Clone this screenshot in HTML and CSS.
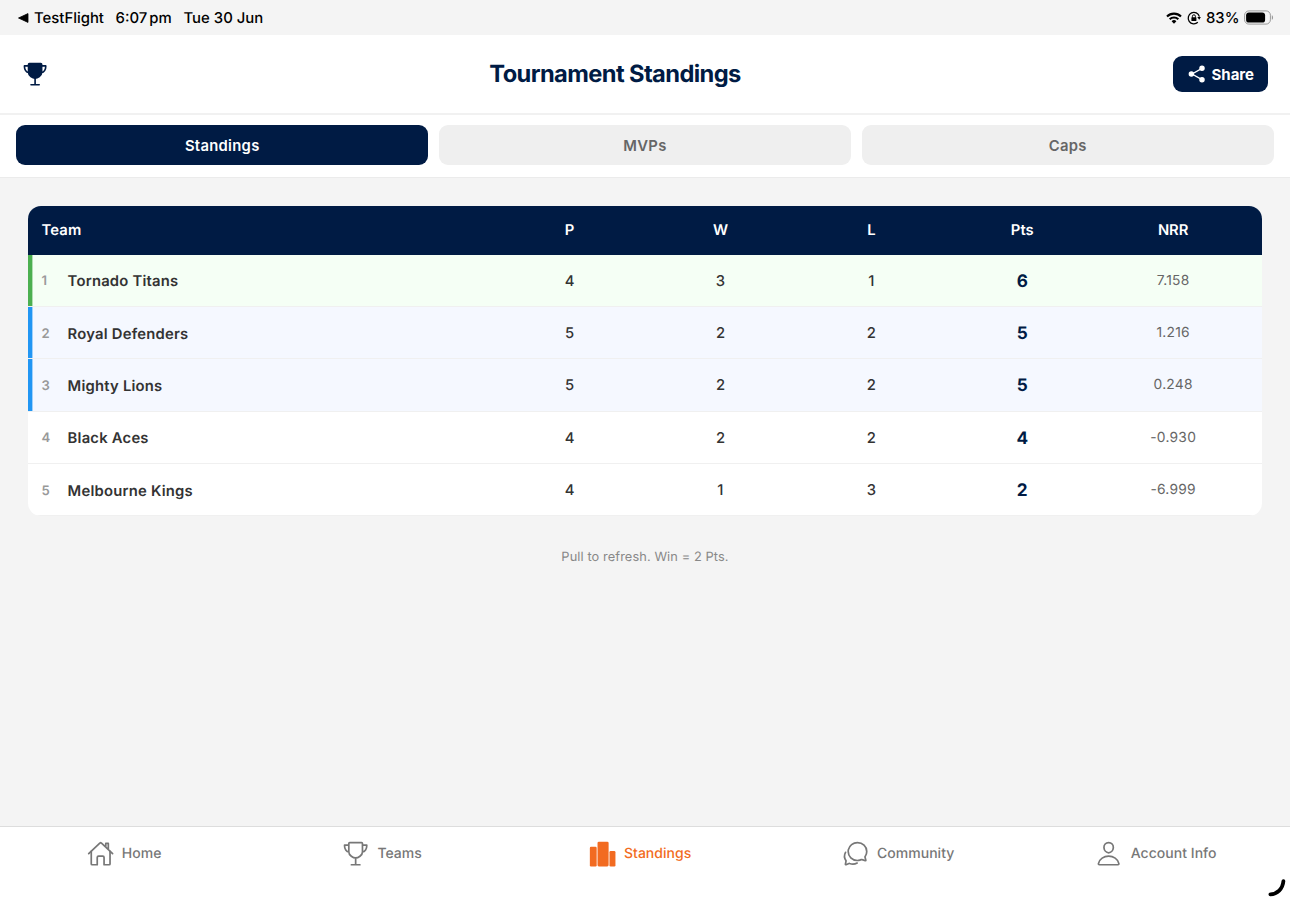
FILE: index.html
```html
<!DOCTYPE html>
<html lang="en">
<head>
<meta charset="utf-8">
<title>Tournament Standings</title>
<link rel="stylesheet" href="styles.css">
</head>
<body>
<div class="app">
  <div class="status">
    <div class="status-left">
      <svg class="back" viewBox="0 0 11 10"><path d="M.5 5 10 .6V9.4Z" fill="#000" stroke="#000" stroke-width=".8" stroke-linejoin="round"/></svg>
      <span class="st-app">TestFlight</span><span class="st-time">6:07<i></i>pm</span><span class="st-date">Tue 30 Jun</span>
    </div>
    <div class="status-right">
      <svg class="wifi" viewBox="0 0 16 12" fill="none" stroke="#000" stroke-width="2.1"><path d="M1 4.5a10 10 0 0 1 14 0M3.7 7.2a6.1 6.1 0 0 1 8.6 0"/><path d="M8 11.7 5.6 9.2a3.4 3.4 0 0 1 4.8 0Z" fill="#000" stroke="none"/></svg>
      <svg class="lock" viewBox="0 0 14 14" fill="none" stroke="#000" stroke-width="1.3"><path d="M10.8 11.3A5.7 5.7 0 1 1 12.4 5.6"/><path d="M10.3 6h3.6l-1.7 2.7Z" fill="#000" stroke="none"/><path d="M5.4 6.7V5.3a1.5 1.5 0 0 1 3 0v1.4" stroke-width="1"/><rect x="4.4" y="6.2" width="5" height="3.8" rx=".6" fill="#000" stroke="none"/></svg>
      <span class="st-pct">83%</span>
      <svg class="battery" viewBox="0 0 30 15"><rect x=".6" y=".9" width="25.8" height="13.2" rx="4.3" fill="none" stroke="#999"/><rect x="2.1" y="2.4" width="19" height="10.2" rx="2.9"/><path d="M27.8 5.2c1.7.6 1.7 4 0 4.6Z" fill="#999"/></svg>
    </div>
  </div>
  <header class="header">
    <svg class="cup" viewBox="0 0 512 512" fill="none" stroke="currentColor" stroke-width="32" stroke-linecap="round" stroke-linejoin="round"><path d="M176 464H336M256 464V336M128 96H48v16c0 55.22 33.55 112 80 112M384 96h80v16c0 55.22-33.55 112-80 112"/><path fill="currentColor" d="M384 224c0-50.64-.08-134.63-.12-160a16 16 0 0 0-16-16l-223.79.26a16 16 0 0 0-16 15.95c0 30.58-.13 129.17-.13 159.79 0 64.28 83 112 128 112S384 288.28 384 224Z"/></svg>
    <h1>Tournament Standings</h1>
    <button class="share"><svg viewBox="0 0 512 512" fill="#fff" stroke="#fff" stroke-width="36"><path d="m128 256 256-144M128 256l256 144"/><circle cx="112" cy="256" r="52"/><circle cx="384" cy="108" r="52"/><circle cx="384" cy="404" r="52"/></svg><span>Share</span></button>
  </header>
  <nav class="segments">
    <button class="segment active">Standings</button>
    <button class="segment">MVPs</button>
    <button class="segment">Caps</button>
  </nav>
  <main class="content">
    <section class="table">
      <div class="row head"><div class="team">Team</div><div>P</div><div>W</div><div>L</div><div>Pts</div><div>NRR</div></div>
      <div class="row first"><div class="team"><span class="rank">1</span>Tornado Titans</div><div>4</div><div>3</div><div>1</div><div class="pts">6</div><div class="nrr">7.158</div></div>
      <div class="row playoff"><div class="team"><span class="rank">2</span>Royal Defenders</div><div>5</div><div>2</div><div>2</div><div class="pts">5</div><div class="nrr">1.216</div></div>
      <div class="row playoff"><div class="team"><span class="rank">3</span>Mighty Lions</div><div>5</div><div>2</div><div>2</div><div class="pts">5</div><div class="nrr">0.248</div></div>
      <div class="row"><div class="team"><span class="rank">4</span>Black Aces</div><div>4</div><div>2</div><div>2</div><div class="pts">4</div><div class="nrr">-0.930</div></div>
      <div class="row"><div class="team"><span class="rank">5</span>Melbourne Kings</div><div>4</div><div>1</div><div>3</div><div class="pts">2</div><div class="nrr">-6.999</div></div>
    </section>
    <p class="hint">Pull to refresh. Win = 2 Pts.</p>
  </main>
  <nav class="tabbar">
    <a class="tab"><svg viewBox="0 0 512 512"><path d="M80 212V448a16 16 0 0 0 16 16h96V328a24 24 0 0 1 24-24h80a24 24 0 0 1 24 24V464h96a16 16 0 0 0 16-16V212"/><path d="M480 256 266.89 52c-5-5.28-16.69-5.34-21.78 0L32 256M400 179V64H352v69"/></svg><span>Home</span></a>
    <a class="tab"><svg viewBox="0 0 512 512"><path d="M176 464H336M256 464V336M384 224c0-50.64-.08-134.63-.12-160a16 16 0 0 0-16-16l-223.79.26a16 16 0 0 0-16 15.95c0 30.58-.13 129.17-.13 159.79 0 64.28 83 112 128 112S384 288.28 384 224ZM128 96H48v16c0 55.22 33.55 112 80 112M384 96h80v16c0 55.22-33.55 112-80 112"/></svg><span>Teams</span></a>
    <a class="tab current"><svg viewBox="0 0 512 512"><g fill="currentColor" stroke="none"><rect x="16" y="128" width="128" height="368" rx="22"/><rect x="160" y="32" width="208" height="464" rx="26"/><rect x="384" y="208" width="112" height="288" rx="22"/></g></svg><span>Standings</span></a>
    <a class="tab"><svg viewBox="0 0 512 512"><path d="M431 320.6c-1-3.6 1.2-8.6 3.3-12.2a33.68 33.68 0 0 1 2.1-3.1A162 162 0 0 0 464 215c.3-92.2-77.5-167-173.7-167C206.4 48 136.4 105.1 120 180.9a160.7 160.7 0 0 0-3.7 34.2c0 92.3 74.8 169.1 171 169.1 15.3 0 35.9-4.6 47.2-7.7s22.5-7.2 25.4-8.3a26.44 26.44 0 0 1 9.3-1.7 26 26 0 0 1 10.1 2L436 388.6a13.52 13.52 0 0 0 3.9 1 8 8 0 0 0 8-8 12.85 12.85 0 0 0-.5-2.7Z"/><path d="M66.46 232a146.23 146.23 0 0 0 6.39 152.67c2.31 3.49 3.61 6.19 3.21 8s-11.93 61.87-11.93 61.87a8 8 0 0 0 2.71 7.68A8.17 8.17 0 0 0 72 464a7.26 7.26 0 0 0 2.91-.6l56.21-22a15.7 15.7 0 0 1 12 .2c18.94 7.38 39.88 12 60.83 12A159.21 159.21 0 0 0 284 432.11"/></svg><span>Community</span></a>
    <a class="tab"><svg viewBox="0 0 512 512"><path d="M344 144c-3.92 52.87-44 96-88 96s-84.15-43.12-88-96c-4-55 35-96 88-96S348 90 344 144Z"/><path d="M256 304c-87 0-175.3 48-191.64 138.6C62.39 453.52 68.57 464 80 464H432c11.44 0 17.62-10.48 15.65-21.4C431.3 352 343 304 256 304Z"/></svg><span>Account Info</span></a>
  </nav>
  <svg class="corner" viewBox="0 0 22 22"><path d="M2.4 15.4C9.2 15 14.7 10.2 15.4 2.2" fill="none" stroke="#000" stroke-width="3.8" stroke-linecap="round"/></svg>
</div>
</body>
</html>
```
FILE: styles.css
```css
* { box-sizing: border-box; }
body { margin: 0; font-family: Inter, "Liberation Sans", sans-serif; background: #f4f4f4; color: #333; text-rendering: geometricPrecision; }
button { border: 0; font: inherit; padding: 0; }
.app { position: relative; width: 1290px; height: 901px; display: flex; flex-direction: column; overflow: hidden; }
.status { height: 35px; flex: none; display: flex; justify-content: space-between; align-items: center; padding: 0 16px 0 18px; font-size: 14.9px; font-weight: 500; color: #000; }
.status-left, .status-right { display: flex; align-items: center; white-space: nowrap; }
.back { width: 11px; height: 10px; margin-right: 5px; }
.st-app { width: 81.5px; }
.st-time { width: 68px; }
.st-time i { display: inline-block; width: 2px; }
.wifi { width: 16px; height: 12px; margin-right: 5px; }
.lock { width: 14px; height: 14px; margin-right: 5px; }
.st-pct { width: 38px; }
.battery { width: 30px; height: 15px; }
.header { height: 80px; flex: none; display: grid; grid-template-columns: 26px 1fr 96px; align-items: center; padding: 0 22px; background: #fff; border-bottom: 2px solid #f1f1f1; color: #001b44; }
.cup { width: 26.2px; height: 26.2px; }
h1 { margin: 0 0 0 10px; text-align: center; font-size: 23.7px; line-height: 30px; font-weight: 700; letter-spacing: -.6px; }
.share { justify-self: end; width: 95.5px; height: 36px; border-radius: 9px; background: #001b44; color: #fff; display: flex; align-items: center; padding-left: 14px; gap: 5px; font-size: 15px; font-weight: 700; }
.share svg { width: 20px; height: 20px; }
.segments { height: 61.5px; flex: none; display: flex; gap: 11px; padding: 10.4px 16.4px 11.1px; background: #fff; }
.segment { flex: 1; border-radius: 9px; background: #efefef; color: #666; font-size: 14.8px; font-weight: 600; letter-spacing: .3px; padding-top: 1px; }
.segment.active { background: #001b44; color: #fff; }
.content { flex: 1; padding: 28px 28.3px 0; border-top: 1px solid #ebebeb; }
.table { border-radius: 13px; overflow: hidden; background: #fff; }
.row { display: grid; grid-template-columns: 3fr repeat(5, 1fr); align-items: center; height: 52.4px; padding: 1px 13.1px 0; border-bottom: 1px solid #f0f0f0; text-align: center; font-size: 14.8px; font-weight: 500; }
.head { height: 49px; padding-top: 0; border: 0; background: #001b44; color: #fff; font-weight: 600; }
.team { text-align: left; font-weight: 600; letter-spacing: .22px; display: flex; align-items: center; }
.row:not(.head) .team { padding-top: 1px; }
.rank { width: 26.2px; font-size: 13.1px; color: #999; }
.first { background: #f5fff5; box-shadow: inset 4.4px 0 #4caf50; }
.playoff { background: #f5f8ff; box-shadow: inset 4.4px 0 #2196f3; }
.pts { font-size: 17.2px; font-weight: 700; color: #001b44; padding-top: 1px; }
.nrr { font-size: 13.8px; font-weight: 400; letter-spacing: .25px; color: #666; }
.hint { margin: 33.5px 0 0; text-align: center; font-size: 12.8px; line-height: 16px; letter-spacing: .1px; color: #888; }
.tabbar { height: 75px; flex: none; border-top: 1px solid #ddd; background: #fff; display: grid; grid-template-columns: repeat(5, 1fr); align-items: start; padding: 0; }
.tab { height: 52.5px; display: flex; align-items: center; justify-content: center; gap: 8px; color: #777; font-size: 14px; font-weight: 500; letter-spacing: .04px; padding-right: 10px; white-space: nowrap; }
.tab svg { width: 27.3px; height: 27.3px; fill: none; stroke: currentColor; stroke-width: 32; stroke-linecap: round; stroke-linejoin: round; }
.current { color: #f26b21; }
.corner { position: absolute; right: 0; bottom: 0; width: 22px; height: 22px; }
```
